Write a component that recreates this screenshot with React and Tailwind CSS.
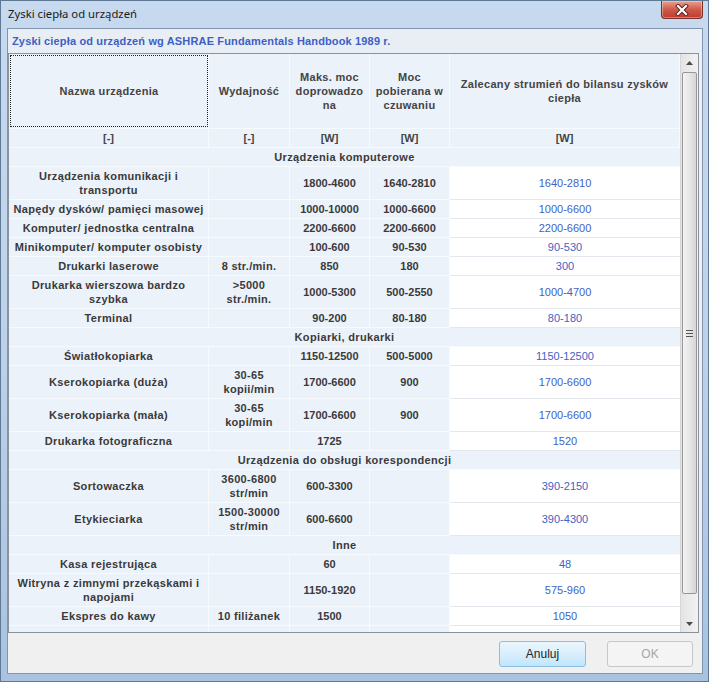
import React from "react";

const grid = "grid grid-cols-[200px_81px_80px_80px_230px]";

const rows = [
  { section: "Urządzenia komputerowe" },
  ["Urządzenia komunikacji i\ntransportu", "", "1800-4600", "1640-2810", "1640-2810", true],
  ["Napędy dysków/ pamięci masowej", "", "1000-10000", "1000-6600", "1000-6600"],
  ["Komputer/ jednostka centralna", "", "2200-6600", "2200-6600", "2200-6600"],
  ["Minikomputer/ komputer osobisty", "", "100-600", "90-530", "90-530"],
  ["Drukarki laserowe", "8 str./min.", "850", "180", "300"],
  ["Drukarka wierszowa bardzo\nszybka", ">5000\nstr./min.", "1000-5300", "500-2550", "1000-4700", true],
  ["Terminal", "", "90-200", "80-180", "80-180"],
  { section: "Kopiarki, drukarki" },
  ["Światłokopiarka", "", "1150-12500", "500-5000", "1150-12500"],
  ["Kserokopiarka (duża)", "30-65\nkopii/min", "1700-6600", "900", "1700-6600", true],
  ["Kserokopiarka (mała)", "30-65\nkopi/min", "1700-6600", "900", "1700-6600", true],
  ["Drukarka fotograficzna", "", "1725", "", "1520"],
  { section: "Urządzenia do obsługi korespondencji" },
  ["Sortowaczka", "3600-6800\nstr/min", "600-3300", "", "390-2150", true],
  ["Etykieciarka", "1500-30000\nstr/min", "600-6600", "", "390-4300", true],
  { section: "Inne" },
  ["Kasa rejestrująca", "", "60", "", "48"],
  ["Witryna z zimnymi przekąskami i\nnapojami", "", "1150-1920", "", "575-960", true],
  ["Ekspres do kawy", "10 filiżanek", "1500", "", "1050"],
];

const leftCell =
  "flex items-center justify-center whitespace-pre-line border-b border-r border-[#f8fbfe] bg-[#ecf2fa] text-center";

function DataRow({ row }) {
  const [name, cap, max, standby, rec, tall] = row;
  return (
    <div className={`${grid} ${tall ? "h-[33px]" : "h-[19px]"}`}>
      <div className={`${leftCell} tracking-[0.35px]`}>{name}</div>
      <div className={`${leftCell} tracking-[0.3px]`}>{cap}</div>
      <div className={leftCell}>{max}</div>
      <div className={leftCell}>{standby}</div>
      <div className="flex items-center justify-center border-b border-[#e3e8ef] bg-white font-normal text-[#4262c4]">
        {rec}
      </div>
    </div>
  );
}

function Arrow({ down }) {
  return (
    <div className="flex h-[17px] items-center justify-center">
      <svg width="7" height="4" viewBox="0 0 7 4">
        <polygon points={down ? "0,0 7,0 3.5,4" : "0,4 7,4 3.5,0"} fill="#4a4a4a" />
      </svg>
    </div>
  );
}

function Scrollbar() {
  return (
    <div className="flex w-[18px] flex-col border-l border-[#d6d6d6] bg-gradient-to-r from-[#e4e4e4] to-[#f2f2f2]">
      <Arrow />
      <div className="flex-1 px-[1px] pt-[1px]">
        <div className="flex h-[522px] flex-col items-center justify-center gap-[2px] rounded-[2px] border border-[#979797] bg-gradient-to-r from-[#f4f4f4] via-[#e6e6e6] to-[#d6d6d6]">
          <span className="h-[1px] w-[7px] bg-[#555]" />
          <span className="h-[1px] w-[7px] bg-[#555]" />
          <span className="h-[1px] w-[7px] bg-[#555]" />
        </div>
      </div>
      <Arrow down />
    </div>
  );
}

function CloseButton() {
  return (
    <div className="mr-[5px] flex h-[18px] w-[42px] items-center justify-center rounded-b-[4px] border border-t-0 border-[#7a2f2a] bg-gradient-to-b from-[#e6a191] via-[#cf5a48] to-[#c0392f] shadow-[inset_0_0_0_1px_rgba(255,255,255,0.35)]">
      <svg width="14" height="12" viewBox="0 0 14 12">
        <path d="M3 2 L11 10 M11 2 L3 10" stroke="#5a1d18" strokeWidth="4" strokeLinecap="square" />
        <path d="M3 2 L11 10 M11 2 L3 10" stroke="#ffffff" strokeWidth="2.2" strokeLinecap="square" />
      </svg>
    </div>
  );
}

export default function App() {
  return (
    <div className="flex h-[682px] w-[709px] flex-col overflow-hidden border border-[#5f7893] bg-gradient-to-b from-[#c7d9ee] via-[#bdd2ea] to-[#a8c2e0] font-['Liberation_Sans',Arial,sans-serif]">
      <div className="flex h-[27px] shrink-0 items-start justify-between">
        <span className="pl-[7px] pt-[5px] font-['Noto_Sans',sans-serif] text-[11.3px] leading-[16px] text-[#1b1b1b]">
          Zyski ciepła od urządzeń
        </span>
        <CloseButton />
      </div>

      <div className="ml-[6px] mr-[5px] flex flex-1 flex-col overflow-hidden border border-[#8196ae] bg-[#f0f0f0]">
        <div className="flex h-[24px] shrink-0 items-center bg-[#e9eef4] pl-[4px] text-[11px] font-bold tracking-[0.15px] text-[#3f5ec6]">
          Zyski ciepła od urządzeń wg ASHRAE Fundamentals Handbook 1989 r.
        </div>

        <div className="mr-[3px] flex h-[580px] shrink-0 border border-[#8a929c] bg-white">
          <div className="w-[671px] overflow-hidden text-[11px] font-bold leading-[14px] text-[#3a3a3a]">
            <div className={`${grid} h-[75px] tracking-[0.3px] text-[#444]`}>
              <div className="border-b border-r border-[#f8fbfe] bg-[#ecf2fa] p-[1px] pr-0">
                <div className="flex h-full items-center justify-center border border-dotted border-[#222]">
                  Nazwa urządzenia
                </div>
              </div>
              <div className={leftCell}>Wydajność</div>
              <div className={leftCell}>{"Maks. moc\ndoprowadzo\nna"}</div>
              <div className={leftCell}>{"Moc\npobierana w\nczuwaniu"}</div>
              <div className={leftCell}>{"Zalecany strumień do bilansu zysków\nciepła"}</div>
            </div>
            <div className={`${grid} h-[19px] text-[#444]`}>
              <div className={leftCell}>[-]</div>
              <div className={leftCell}>[-]</div>
              <div className={leftCell}>[W]</div>
              <div className={leftCell}>[W]</div>
              <div className={leftCell}>[W]</div>
            </div>
            {rows.map((row, i) =>
              row.section ? (
                <div
                  key={i}
                  className="flex h-[19px] items-center justify-center border-b border-[#f8fbfe] bg-[#ecf2fa] tracking-[0.35px]"
                >
                  {row.section}
                </div>
              ) : (
                <DataRow key={i} row={row} />
              )
            )}
            <div className={`${grid} h-[19px]`}>
              <div className={leftCell} />
              <div className={leftCell} />
              <div className={leftCell} />
              <div className={leftCell} />
              <div className="border-b border-[#e3e8ef] bg-white" />
            </div>
          </div>
          <Scrollbar />
        </div>

        <div className="flex flex-1 items-start justify-end gap-[21px] pr-[9px] pt-[8px] text-[12px]">
          <button className="h-[26px] w-[87px] rounded-[3px] border border-[#8cbde3] bg-gradient-to-b from-[#eaf6fd] via-[#d9effc] to-[#bee6fd] text-[#222]">
            Anuluj
          </button>
          <button className="h-[26px] w-[86px] rounded-[3px] border border-[#c4c8cc] bg-[#f4f4f4] text-[#a6a6a6]">
            OK
          </button>
        </div>
      </div>
      <div className="h-[7px] shrink-0" />
    </div>
  );
}
